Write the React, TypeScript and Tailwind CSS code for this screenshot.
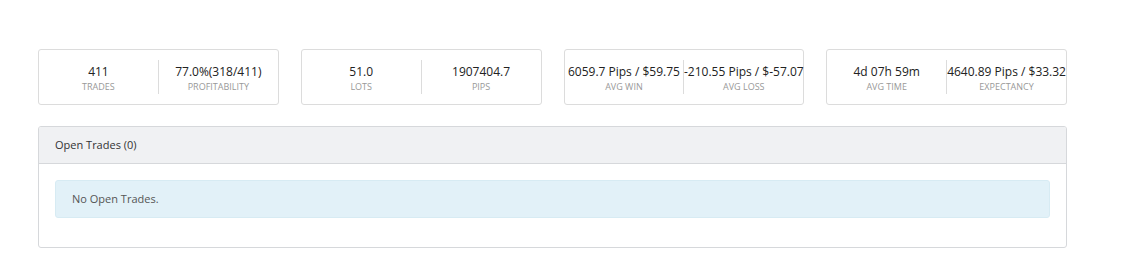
const stats = [
  [
    { value: '411', label: 'TRADES' },
    { value: '77.0%(318/411)', label: 'PROFITABILITY' },
  ],
  [
    { value: '51.0', label: 'LOTS' },
    { value: '1907404.7', label: 'PIPS' },
  ],
  [
    { value: '6059.7 Pips / $59.75', label: 'AVG WIN' },
    { value: '-210.55 Pips / $-57.07', label: 'AVG LOSS' },
  ],
  [
    { value: '4d 07h 59m', label: 'AVG TIME' },
    { value: '4640.89 Pips / $33.32', label: 'EXPECTANCY' },
  ],
];

function Stat({ value, label }: { value: string; label: string }) {
  return (
    <div className="flex-1 flex flex-col items-center justify-center min-w-0 pt-[3px]">
      <div className="text-[12px] leading-[16px] text-[#222] whitespace-nowrap">{value}</div>
      <div className="text-[9px] leading-[14px] text-[#999] whitespace-nowrap">{label}</div>
    </div>
  );
}

export default function App() {
  return (
    <div
      className="min-h-[260px] bg-white pt-[49px] pl-[38px]"
      style={{ fontFamily: '"Open Sans", "Noto Sans", sans-serif' }}
    >
      <div className="w-[1029px]">
        {/* stat cards */}
        <div className="grid grid-cols-4 gap-[22px]">
          {stats.map((pair, i) => (
            <div
              key={i}
              className="h-[56px] flex items-center border border-[#dcdcdc] rounded-[3px] bg-white"
            >
              <Stat {...pair[0]} />
              <div className="w-px self-stretch my-[10px] bg-[#dcdcdc]" />
              <Stat {...pair[1]} />
            </div>
          ))}
        </div>

        {/* open trades panel */}
        <div className="mt-[21px] border border-[#d6d8db] rounded-[3px] overflow-hidden">
          <div className="h-[37px] flex items-center px-4 bg-[#f0f1f3] border-b border-[#d6d8db] text-[11px] text-[#333]">
            Open Trades (0)
          </div>
          <div className="px-4 pt-4 pb-[29px]">
            <div className="h-[38px] flex items-center px-4 bg-[#e2f1f8] border border-[#d7ebf3] rounded-[3px] text-[11px] text-[#555]">
              No Open Trades.
            </div>
          </div>
        </div>
      </div>
    </div>
  );
}
